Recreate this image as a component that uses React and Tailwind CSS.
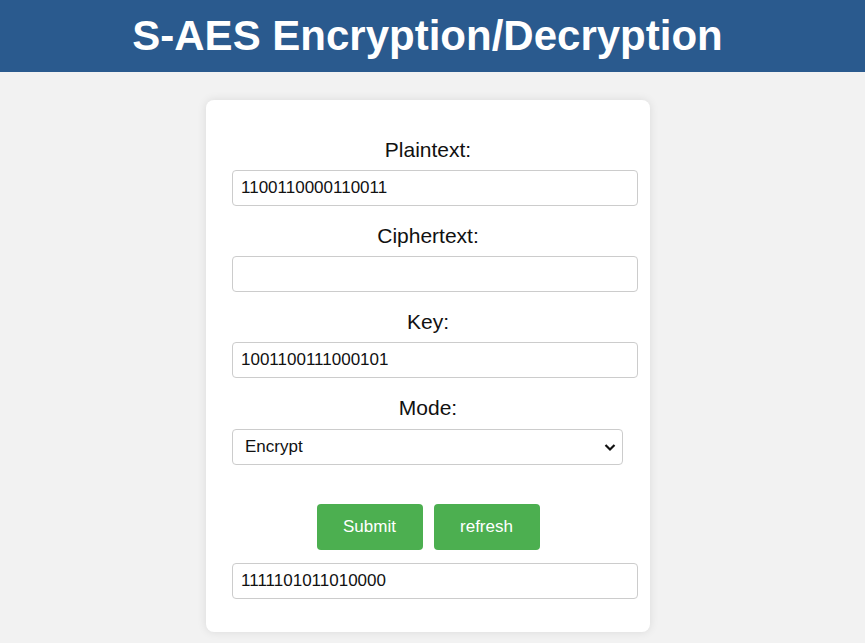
import React, { useState } from 'react';

const inputCls =
  'ml-[26px] h-9 w-[406px] rounded border border-[#ccc] bg-white px-2 text-[17px] text-[#111] outline-none';

const Field = ({ label, value, onChange }) => (
  <div className="flex flex-col">
    <label className="text-center text-[21px] leading-[24px] text-[#111]">{label}</label>
    <input type="text" value={value} onChange={(e) => onChange(e.target.value)} className={`mt-2 ${inputCls}`} />
  </div>
);

export default function App() {
  const [plain, setPlain] = useState('1100110000110011');
  const [cipher, setCipher] = useState('');
  const [key, setKey] = useState('1001100111000101');
  const [mode, setMode] = useState('encrypt');
  const [output, setOutput] = useState('1111101011010000');

  const refresh = () => {
    setPlain('');
    setCipher('');
    setKey('');
    setOutput('');
  };

  return (
    <div className="min-h-[643px] bg-[#f2f2f2] font-['Liberation_Sans',Arial,sans-serif]">
      <header className="flex h-[72px] items-center justify-center bg-[#2a5a8e] pr-[10px]">
        <h1 className="text-[42px] font-bold leading-none text-white">S-AES Encryption/Decryption</h1>
      </header>

      <div className="flex justify-center pt-7">
        <div className="mr-[9px] w-[444px] rounded-lg bg-white pb-[33px] pt-[38px] shadow-[0_0_10px_rgba(0,0,0,0.1)]">
          <div className="flex flex-col gap-[18px]">
            <Field label="Plaintext:" value={plain} onChange={setPlain} />
            <Field label="Ciphertext:" value={cipher} onChange={setCipher} />
            <Field label="Key:" value={key} onChange={setKey} />
            <div className="flex flex-col">
              <label className="text-center text-[21px] leading-[24px] text-[#111]">Mode:</label>
              <div className="relative ml-[26px] mt-[9px] w-[391px]">
                <select
                  value={mode}
                  onChange={(e) => setMode(e.target.value)}
                  className="h-9 w-full appearance-none rounded border border-[#ccc] bg-white pl-3 text-[17px] text-[#111] outline-none"
                >
                  <option value="encrypt">Encrypt</option>
                  <option value="decrypt">Decrypt</option>
                </select>
                <svg
                  className="pointer-events-none absolute right-[7px] top-[14px]"
                  width="12"
                  height="9"
                  viewBox="0 0 12 9"
                  fill="none"
                >
                  <path d="M1.5 2l4.5 4.5L10.5 2" stroke="#111" strokeWidth="2.2" />
                </svg>
              </div>
            </div>
          </div>

          <div className="mt-[39px] flex justify-center gap-[11px]">
            <button className="h-[46px] w-[106px] rounded bg-[#4caf50] text-[17px] text-white">Submit</button>
            <button onClick={refresh} className="h-[46px] w-[106px] rounded bg-[#4caf50] text-[17px] text-white">
              refresh
            </button>
          </div>

          <input
            type="text"
            value={output}
            onChange={(e) => setOutput(e.target.value)}
            className={`mt-[13px] block ${inputCls}`}
          />
        </div>
      </div>
    </div>
  );
}
